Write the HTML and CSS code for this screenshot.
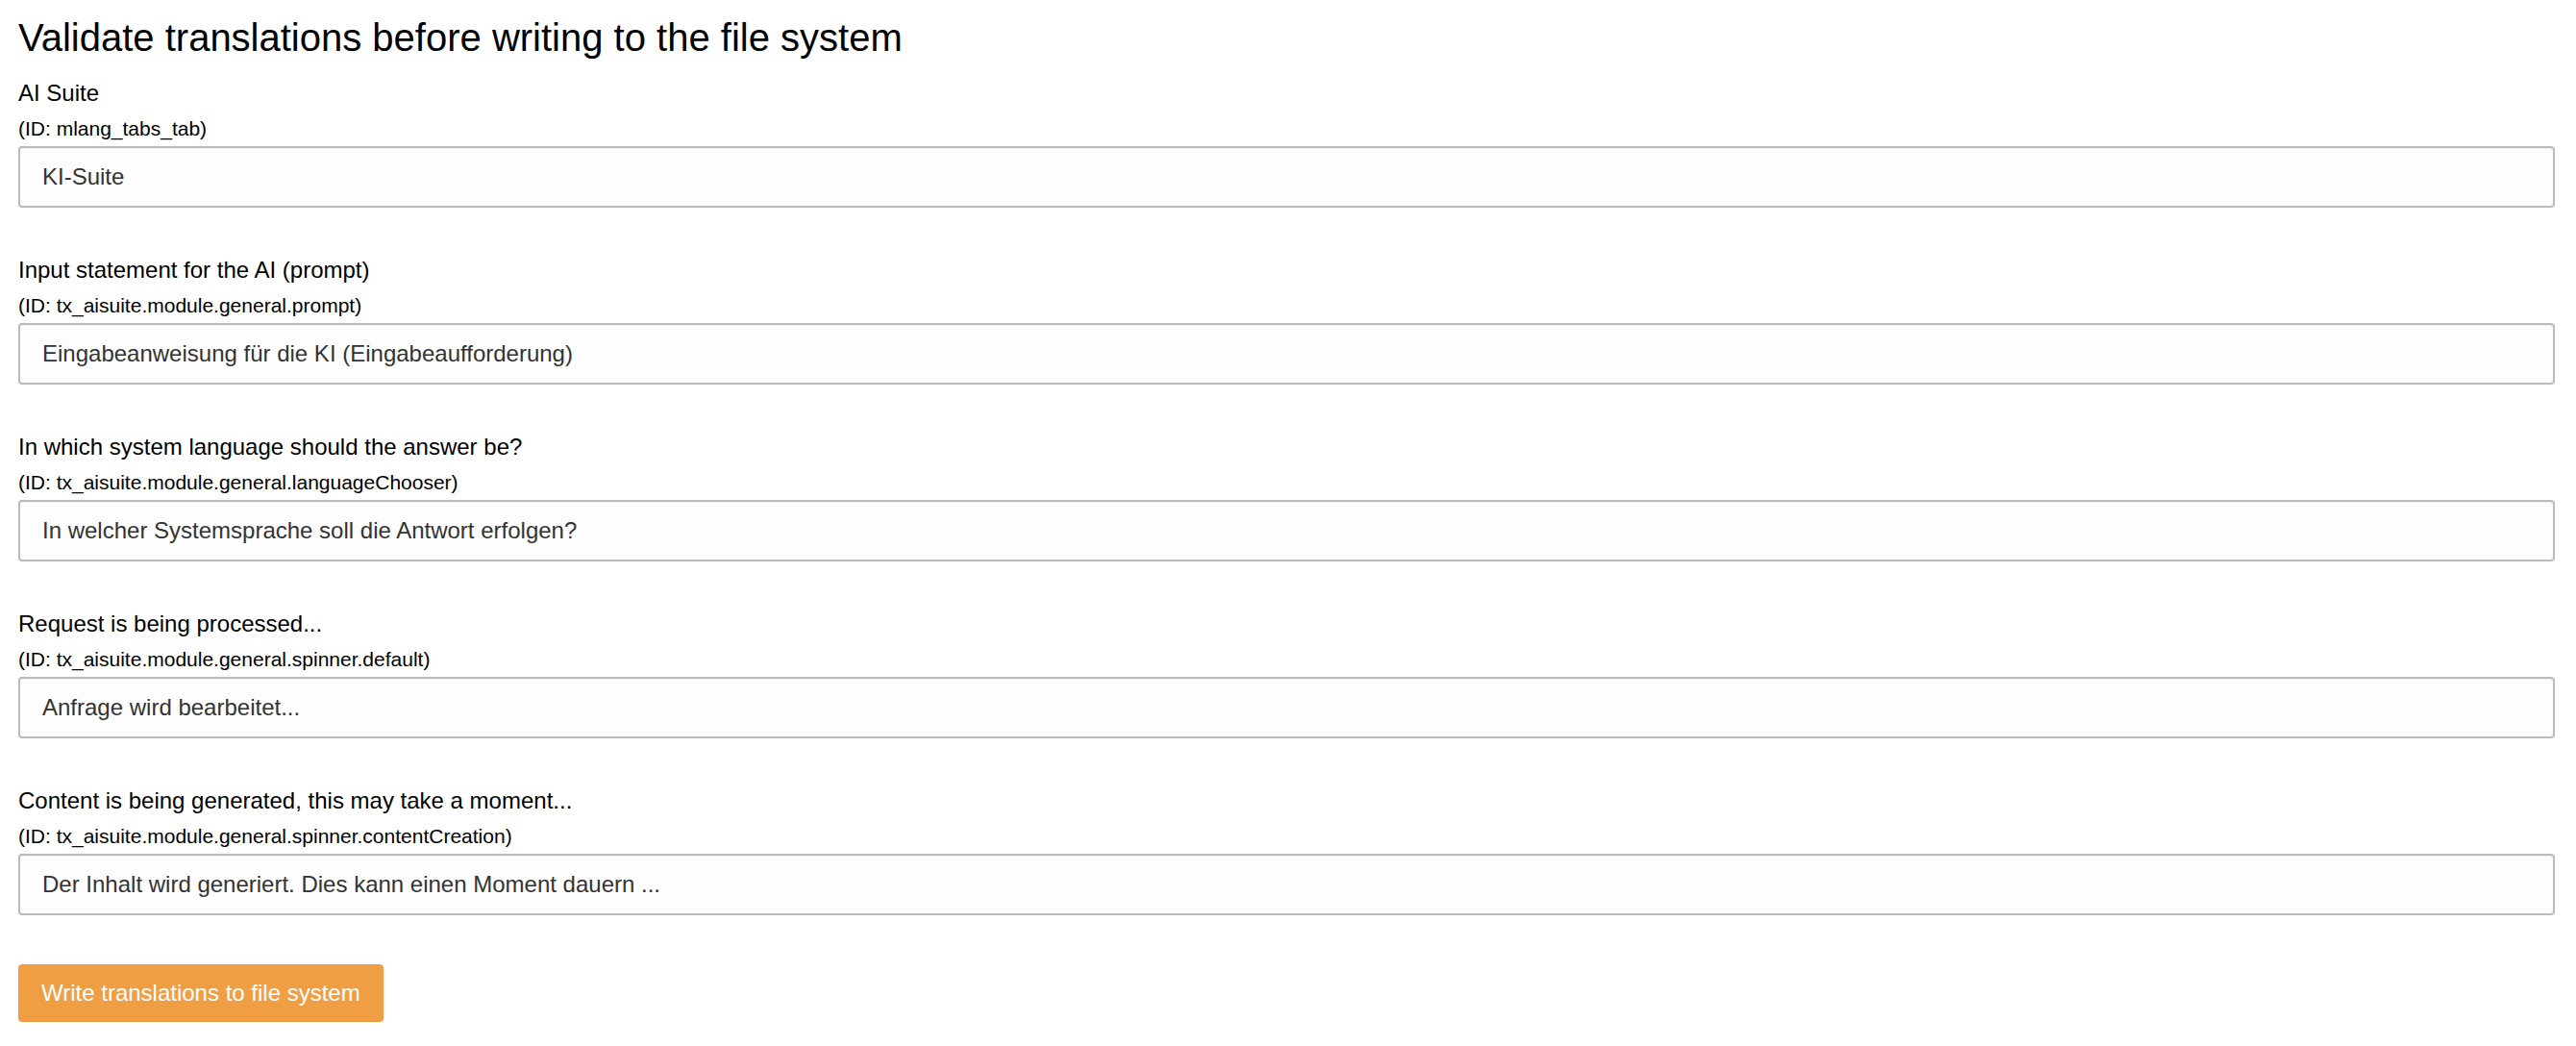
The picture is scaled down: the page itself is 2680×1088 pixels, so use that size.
FILE: index.html
```html
<!DOCTYPE html>
<html lang="en">
<head>
<meta charset="utf-8">
<title>Validate translations</title>
<link rel="stylesheet" href="styles.css">
</head>
<body>
<main class="page">
  <h1 class="title">Validate translations before writing to the file system</h1>
  <form class="form">
    <div class="field">
      <label class="label" for="f1">AI Suite</label>
      <div class="id">(ID: mlang_tabs_tab)</div>
      <input class="input" id="f1" type="text" value="KI-Suite">
    </div>
    <div class="field">
      <label class="label" for="f2">Input statement for the AI (prompt)</label>
      <div class="id">(ID: tx_aisuite.module.general.prompt)</div>
      <input class="input" id="f2" type="text" value="Eingabeanweisung für die KI (Eingabeaufforderung)">
    </div>
    <div class="field">
      <label class="label" for="f3">In which system language should the answer be?</label>
      <div class="id">(ID: tx_aisuite.module.general.languageChooser)</div>
      <input class="input" id="f3" type="text" value="In welcher Systemsprache soll die Antwort erfolgen?">
    </div>
    <div class="field">
      <label class="label" for="f4">Request is being processed...</label>
      <div class="id">(ID: tx_aisuite.module.general.spinner.default)</div>
      <input class="input" id="f4" type="text" value="Anfrage wird bearbeitet...">
    </div>
    <div class="field">
      <label class="label" for="f5">Content is being generated, this may take a moment...</label>
      <div class="id">(ID: tx_aisuite.module.general.spinner.contentCreation)</div>
      <input class="input" id="f5" type="text" value="Der Inhalt wird generiert. Dies kann einen Moment dauern ...">
    </div>
    <div class="actions">
      <button class="btn" type="button">Write translations to file system</button>
    </div>
  </form>
</main>
</body>
</html>
```
FILE: styles.css
```css
html, body {
  margin: 0;
  padding: 0;
  background: #ffffff;
}

body {
  font-family: "Liberation Sans", Arial, sans-serif;
  color: #000000;
}

.page {
  padding: 16px 22px 0 19px;
}

.title {
  margin: 0 0 21px 0;
  font-size: 40px;
  line-height: 46px;
  font-weight: 400;
  color: #000000;
}

.form {
  display: flex;
  flex-direction: column;
}

.field {
  display: flex;
  flex-direction: column;
  margin-bottom: 51px;
}

.field:last-of-type {
  margin-bottom: 45px;
}

.label {
  display: block;
  font-size: 24px;
  line-height: 28px;
  margin-bottom: 11px;
  color: #000000;
}

.id {
  font-size: 21px;
  line-height: 24px;
  margin-bottom: 6px;
  color: #000000;
}

.input {
  display: block;
  box-sizing: border-box;
  width: 100%;
  height: 64px;
  margin: 0;
  padding: 0 23px;
  border: 2px solid #bbbbbb;
  border-radius: 4px;
  background: #fdfdfd;
  box-shadow: inset 0 1px 1px rgba(0, 0, 0, 0.06);
  font-family: "Liberation Sans", Arial, sans-serif;
  font-size: 24px;
  color: #333333;
  outline: none;
}

.actions {
  display: flex;
}

.btn {
  box-sizing: border-box;
  height: 60px;
  padding: 0 23px;
  border: 1px solid #ee9b41;
  border-radius: 4px;
  background: #f09e44;
  color: #ffffff;
  font-family: "Liberation Sans", Arial, sans-serif;
  font-size: 24px;
  line-height: 36px;
  box-shadow: 0 1px 2px rgba(0, 0, 0, 0.12);
  cursor: pointer;
}
```
